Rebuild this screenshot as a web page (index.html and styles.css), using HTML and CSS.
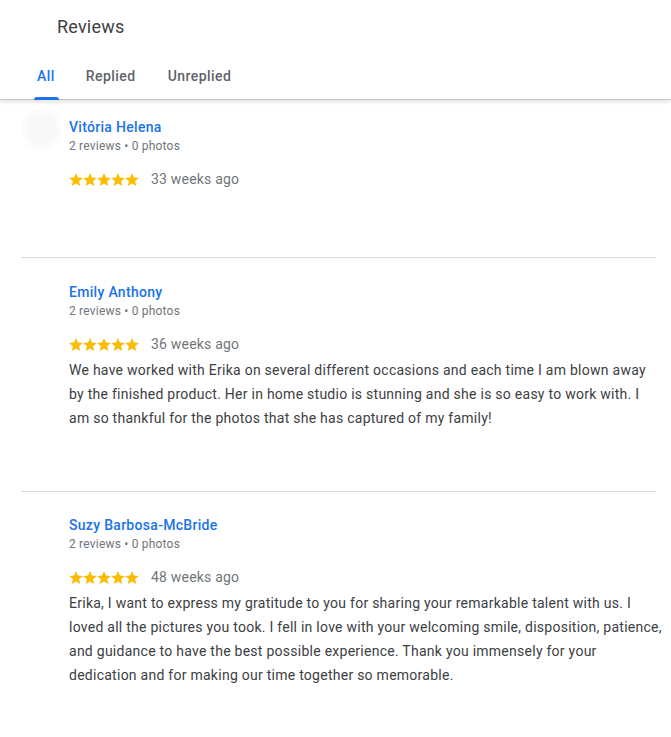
FILE: index.html
```html
<!DOCTYPE html>
<html lang="en">
<head>
<meta charset="utf-8">
<title>Reviews</title>
<link rel="stylesheet" href="styles.css">
</head>
<body>
<header class="header">
  <div class="title">Reviews</div>
  <nav class="tabs">
    <div class="tab tab--active"><span class="tab-label">All</span></div>
    <div class="tab"><span class="tab-label">Replied</span></div>
    <div class="tab"><span class="tab-label">Unreplied</span></div>
  </nav>
</header>
<main class="list">
  <article class="review review--first review--notext">
    <div class="avatar"></div>
    <div class="body">
      <div class="name">Vitória Helena</div>
      <div class="meta">2 reviews • 0 photos</div>
      <div class="rating">
        <span class="stars">
          <svg viewBox="2 2 20 19"><path d="M12 17.27L18.18 21l-1.64-7.03L22 9.24l-7.19-.61L12 2 9.19 8.63 2 9.24l5.46 4.73L5.82 21z"/></svg><svg viewBox="2 2 20 19"><path d="M12 17.27L18.18 21l-1.64-7.03L22 9.24l-7.19-.61L12 2 9.19 8.63 2 9.24l5.46 4.73L5.82 21z"/></svg><svg viewBox="2 2 20 19"><path d="M12 17.27L18.18 21l-1.64-7.03L22 9.24l-7.19-.61L12 2 9.19 8.63 2 9.24l5.46 4.73L5.82 21z"/></svg><svg viewBox="2 2 20 19"><path d="M12 17.27L18.18 21l-1.64-7.03L22 9.24l-7.19-.61L12 2 9.19 8.63 2 9.24l5.46 4.73L5.82 21z"/></svg><svg viewBox="2 2 20 19"><path d="M12 17.27L18.18 21l-1.64-7.03L22 9.24l-7.19-.61L12 2 9.19 8.63 2 9.24l5.46 4.73L5.82 21z"/></svg>
        </span>
        <span class="when">33 weeks ago</span>
      </div>
    </div>
  </article>
  <article class="review">
    <div class="avatar avatar--blank"></div>
    <div class="body">
      <div class="name">Emily Anthony</div>
      <div class="meta">2 reviews • 0 photos</div>
      <div class="rating">
        <span class="stars">
          <svg viewBox="2 2 20 19"><path d="M12 17.27L18.18 21l-1.64-7.03L22 9.24l-7.19-.61L12 2 9.19 8.63 2 9.24l5.46 4.73L5.82 21z"/></svg><svg viewBox="2 2 20 19"><path d="M12 17.27L18.18 21l-1.64-7.03L22 9.24l-7.19-.61L12 2 9.19 8.63 2 9.24l5.46 4.73L5.82 21z"/></svg><svg viewBox="2 2 20 19"><path d="M12 17.27L18.18 21l-1.64-7.03L22 9.24l-7.19-.61L12 2 9.19 8.63 2 9.24l5.46 4.73L5.82 21z"/></svg><svg viewBox="2 2 20 19"><path d="M12 17.27L18.18 21l-1.64-7.03L22 9.24l-7.19-.61L12 2 9.19 8.63 2 9.24l5.46 4.73L5.82 21z"/></svg><svg viewBox="2 2 20 19"><path d="M12 17.27L18.18 21l-1.64-7.03L22 9.24l-7.19-.61L12 2 9.19 8.63 2 9.24l5.46 4.73L5.82 21z"/></svg>
        </span>
        <span class="when">36 weeks ago</span>
      </div>
      <p class="text">We have worked with Erika on several different occasions and each time I am blown away<br>by the finished product. Her in home studio is stunning and she is so easy to work with. I<br>am so thankful for the photos that she has captured of my family!</p>
    </div>
  </article>
  <article class="review">
    <div class="avatar avatar--blank"></div>
    <div class="body">
      <div class="name">Suzy Barbosa-McBride</div>
      <div class="meta">2 reviews • 0 photos</div>
      <div class="rating">
        <span class="stars">
          <svg viewBox="2 2 20 19"><path d="M12 17.27L18.18 21l-1.64-7.03L22 9.24l-7.19-.61L12 2 9.19 8.63 2 9.24l5.46 4.73L5.82 21z"/></svg><svg viewBox="2 2 20 19"><path d="M12 17.27L18.18 21l-1.64-7.03L22 9.24l-7.19-.61L12 2 9.19 8.63 2 9.24l5.46 4.73L5.82 21z"/></svg><svg viewBox="2 2 20 19"><path d="M12 17.27L18.18 21l-1.64-7.03L22 9.24l-7.19-.61L12 2 9.19 8.63 2 9.24l5.46 4.73L5.82 21z"/></svg><svg viewBox="2 2 20 19"><path d="M12 17.27L18.18 21l-1.64-7.03L22 9.24l-7.19-.61L12 2 9.19 8.63 2 9.24l5.46 4.73L5.82 21z"/></svg><svg viewBox="2 2 20 19"><path d="M12 17.27L18.18 21l-1.64-7.03L22 9.24l-7.19-.61L12 2 9.19 8.63 2 9.24l5.46 4.73L5.82 21z"/></svg>
        </span>
        <span class="when">48 weeks ago</span>
      </div>
      <p class="text">Erika, I want to express my gratitude to you for sharing your remarkable talent with us. I<br>loved all the pictures you took. I fell in love with your welcoming smile, disposition, patience,<br>and guidance to have the best possible experience. Thank you immensely for your<br>dedication and for making our time together so memorable.</p>
    </div>
  </article>
</main>
</body>
</html>
```
FILE: styles.css
```css
* { box-sizing: border-box; }
html, body { margin: 0; padding: 0; background: #fff; }
body {
  font-family: Roboto, "Liberation Sans", Arial, sans-serif;
  color: #3c4043;
  width: 671px;
  overflow: hidden;
}
.header {
  position: relative;
  z-index: 2;
  background: #fff;
  border-bottom: 1px solid #c6c6c6;
  box-shadow: 0 2px 4px rgba(0,0,0,0.12);
}
.title {
  height: 52px;
  padding-left: 57px;
  padding-top: 15px;
  font-size: 18px;
  line-height: 24px;
  color: #3c4043;
  letter-spacing: 0.2px;
}
.tabs {
  display: flex;
  height: 47px;
  padding-left: 21px;
}
.tab {
  padding: 1px 16px 0;
  display: flex;
  align-items: center;
  font-size: 14px;
  font-weight: 500;
  color: #5f6368;
  height: 47px;
  letter-spacing: 0.45px;
}
.tab:nth-child(2) { padding-left: 15px; }
.tab-label { position: relative; display: block; line-height: 20px; }
.tab--active { color: #1a73e8; }
.tab--active .tab-label::after {
  content: "";
  position: absolute;
  left: -3px;
  right: -4px;
  top: 31px;
  height: 3px;
  border-radius: 3px 3px 0 0;
  background: #1a73e8;
}
.list {
  margin-left: 21px;
  width: 635px;
}
.review {
  display: flex;
  gap: 8px;
  padding-top: 24px;
  padding-bottom: 61px;
  border-bottom: 1px solid #dadce0;
}
.review--first { padding-top: 17px; }
.review--notext { padding-bottom: 68px; }
.review:last-child { border-bottom: none; padding-top: 23px; }
.avatar {
  width: 40px;
  height: 44px;
  flex: none;
  border-radius: 50%;
  margin-top: -10px;
  background: radial-gradient(circle, #f6f6f6 0%, #f9f9f9 45%, #fdfdfd 75%, #fff 100%);
}
.avatar--blank { background: transparent; }
.body { flex: 1; min-width: 0; }
.name {
  font-size: 14px;
  font-weight: 500;
  line-height: 20px;
  color: #1a73e8;
  letter-spacing: 0.3px;
}
.meta {
  font-size: 12px;
  line-height: 16px;
  color: #70757a;
  padding-top: 1px;
  letter-spacing: 0.2px;
}
.rating {
  display: flex;
  align-items: center;
  margin-top: 15px;
  height: 20px;
}
.stars { display: flex; }
.stars svg { width: 14px; height: 13px; fill: #fbbc04; display: block; }
.when {
  margin-left: 12px;
  font-size: 14px;
  line-height: 20px;
  color: #70757a;
  letter-spacing: 0.2px;
}
.text {
  margin: 4px 0 0;
  font-size: 14px;
  line-height: 24px;
  color: #3c4043;
  letter-spacing: 0.26px;
  white-space: nowrap;
}
```
